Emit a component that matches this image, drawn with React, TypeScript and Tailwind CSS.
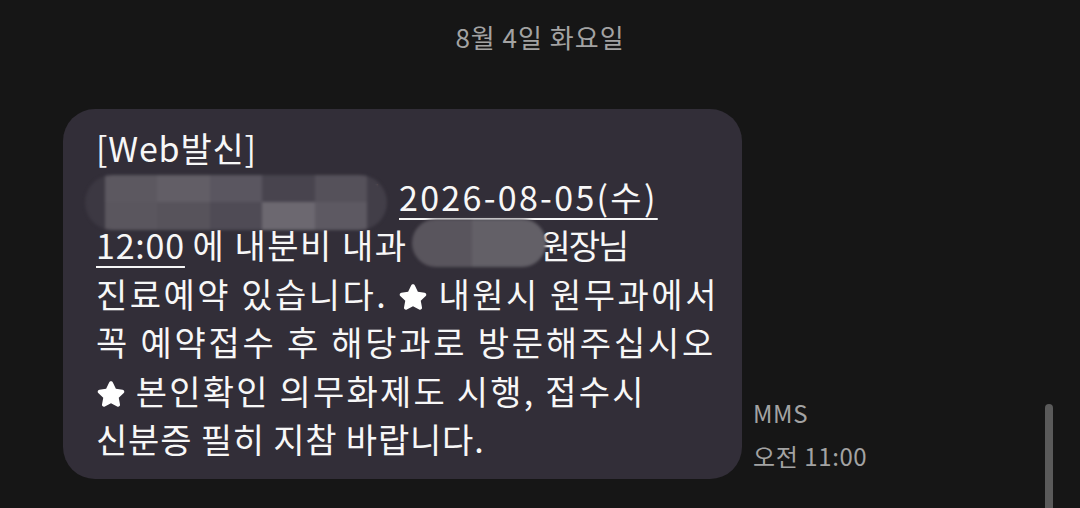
import React from "react";

const Star = () => (
  <svg
    viewBox="0 0 24 24"
    className="inline-block w-[30px] h-[30px] align-[-4px]"
    aria-hidden
  >
    <path
      d="M12 1.8c.7 0 1.2.4 1.5 1l2.4 5 5.4.7c1.3.2 1.8 1.8.9 2.7l-4 3.8 1 5.4c.2 1.3-1.1 2.2-2.3 1.6L12 19.4 7.1 22c-1.2.6-2.5-.3-2.3-1.6l1-5.4-4-3.8c-.9-.9-.4-2.5.9-2.7l5.4-.7 2.4-5c.3-.6.8-1 1.5-1z"
      fill="#ffffff"
    />
  </svg>
);

export default function App() {
  const font = { fontFamily: '"Noto Sans CJK KR", "Noto Sans", sans-serif' };
  return (
    <div
      className="relative w-[1080px] h-[508px] overflow-hidden bg-[#161616]"
      style={font}
    >
      <div className="flex justify-center pt-[19px] text-[26px] leading-[36px] tracking-[1px] text-[#a3a3a3]">
        8월 4일 화요일
      </div>

      <div className="flex items-end mt-[54px] ml-[63px]">
        <div className="w-[679px] rounded-[32px] bg-[#322e38] pl-[33px] pt-[15px] pb-[15px] text-[34px] leading-[48.5px] text-[#f7f7f7]">
          <div className="whitespace-nowrap tracking-[0.8px]">[Web발신]</div>
          <div className="relative whitespace-nowrap">
            <span>[</span>
            <span className="inline-block w-[262px]" />
            <span>]</span>
            <span className="ml-[18px] tracking-[2.3px] underline decoration-[1.5px] underline-offset-[7px]">
              2026-08-05(수)
            </span>
            <div className="absolute left-[-11px] top-[2px] h-[55px] w-[302px] overflow-hidden rounded-[28px] blur-[1.5px] grid grid-cols-[20px_52px_53px_52px_53px_52px_20px] grid-rows-2">
              <div className="row-span-2 bg-[#3c3842]" />
              <div className="bg-[#5c5860]" />
              <div className="bg-[#625e66]" />
              <div className="bg-[#5a5660]" />
              <div className="bg-[#48444e]" />
              <div className="bg-[#55515a]" />
              <div className="row-span-2 bg-[#423e48]" />
              <div className="bg-[#5a565e]" />
              <div className="bg-[#57535b]" />
              <div className="bg-[#4f4b55]" />
              <div className="bg-[#6c6870]" />
              <div className="bg-[#5d5962]" />
            </div>
          </div>
          <div className="relative whitespace-nowrap">
            <span className="tracking-[0.8px] underline decoration-[1.5px] underline-offset-[7px]">
              12:00
            </span>{" "}
            <span className="tracking-[1.5px]">에 내분비 내과</span>
            <span className="inline-block w-[132px]" />
            <span className="tracking-[-2px]">원장님</span>
            <div className="absolute left-[316px] top-[-2px] h-[48px] w-[134px] rounded-[24px] blur-[1.5px] flex overflow-hidden">
              <div className="w-[60px] bg-[#59555d]" />
              <div className="flex-1 bg-[#636067]" />
            </div>
          </div>
          <div className="whitespace-nowrap tracking-[2.5px]">
            진료예약 있습니다. <Star /> 내원시 원무과에서
          </div>
          <div className="whitespace-nowrap tracking-[2.75px]">
            꼭 예약접수 후 해당과로 방문해주십시오
          </div>
          <div className="whitespace-nowrap tracking-[2.2px]">
            <Star /> 본인확인 의무화제도 시행, 접수시
          </div>
          <div className="whitespace-nowrap tracking-[0.8px]">
            신분증 필히 지참 바랍니다.
          </div>
        </div>

        <div className="ml-[11px] mb-[2px] flex flex-col text-[24px] leading-[43px] tracking-[0.6px] text-[#a3a3a3]">
          <span>MMS</span>
          <span>오전 11:00</span>
        </div>
      </div>

      <div className="absolute right-[27px] top-[404px] h-[120px] w-[8px] rounded-full bg-[#5a5a5a]" />
    </div>
  );
}
